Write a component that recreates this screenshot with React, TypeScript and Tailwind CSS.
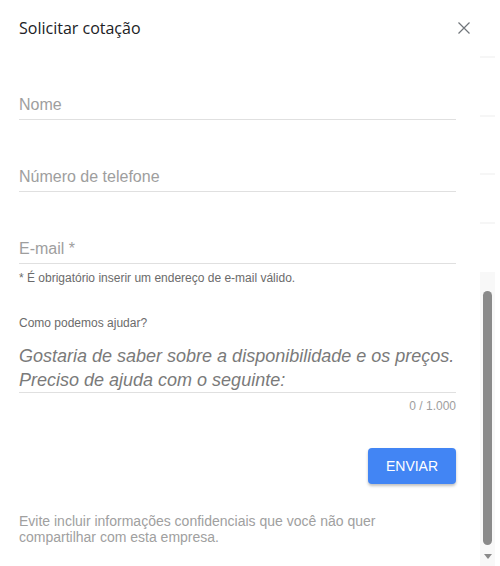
import React, { useState } from "react";

const arial = { fontFamily: '"Liberation Sans", Arial, sans-serif' };

function Campo({ placeholder, className }: { placeholder: string; className?: string }) {
  return (
    <div className={"border-b border-[#e0e0e0] pb-[3px] " + (className ?? "")}>
      <div className="text-[16px] leading-[22px] text-[#9e9e9e]" style={arial}>
        {placeholder}
      </div>
    </div>
  );
}

export default function App() {
  const [mensagem] = useState("");

  return (
    <div className="flex w-[500px] h-[566px] bg-white overflow-hidden">
      {/* coluna principal */}
      <div className="w-[480px] flex flex-col">
        {/* Cabeçalho */}
        <div className="h-[56px] flex items-center justify-between pl-[19px] pr-[4px]">
          <h2
            className="text-[16px] leading-[24px] text-[#202124]"
            style={{ fontFamily: '"Open Sans", sans-serif' }}
          >
            Solicitar cotação
          </h2>
          <button className="w-[24px] h-[24px] flex items-center justify-center">
            <svg width="12" height="12" viewBox="0 0 12 12">
              <path d="M0.5 0.5 L11.5 11.5 M11.5 0.5 L0.5 11.5" stroke="#70757a" strokeWidth="1.2" fill="none" />
            </svg>
          </button>
        </div>

        <div className="pl-[19px] pr-[24px] flex flex-col" style={arial}>
          {/* Nome */}
          <Campo placeholder="Nome" className="mt-[38px]" />

          {/* Telefone */}
          <Campo placeholder="Número de telefone" className="mt-[46px]" />

          {/* E-mail */}
          <Campo placeholder="E-mail *" className="mt-[46px]" />
          <p className="mt-[6px] text-[12px] leading-[16px] text-[#6b6b6b]">
            * É obrigatório inserir um endereço de e-mail válido.
          </p>

          {/* Mensagem */}
          <p className="mt-[29px] text-[12px] leading-[16px] text-[#6b6b6b]">Como podemos ajudar?</p>
          <div className="mt-[13px] border-b border-[#e0e0e0]">
            <p className="text-[18px] leading-[24px] italic text-[#7a7a7a]">
              Gostaria de saber sobre a disponibilidade e os preços.
              <br />
              Preciso de ajuda com o seguinte:
            </p>
          </div>
          <p className="mt-[5px] text-right text-[12px] leading-[16px] text-[#9e9e9e]">
            {mensagem.length} / 1.000
          </p>

          <div className="mt-[34px] flex justify-end">
            <button className="w-[88px] h-[36px] rounded-[4px] bg-[#4285f4] text-white text-[14px] shadow-[0_2px_3px_rgba(0,0,0,0.25)]">
              ENVIAR
            </button>
          </div>

          <p className="mt-[29px] max-w-[400px] text-[14px] leading-[16px] text-[#a0a0a0]">
            Evite incluir informações confidenciais que você não quer compartilhar com esta empresa.
          </p>
        </div>
      </div>

      {/* barra de rolagem */}
      <div className="w-[20px] flex flex-col">
        <div className="mt-[56px] w-[15px] h-[2px] bg-[#f6f6f6]" />
        <div className="mt-[57px] w-[15px] h-[2px] bg-[#f6f6f6]" />
        <div className="mt-[56px] w-[15px] h-[2px] bg-[#f6f6f6]" />
        <div className="mt-[47px] w-[15px] h-[2px] bg-[#f6f6f6]" />
        <div className="mt-[48px] w-[15px] flex-1 bg-[#f8f8f8] flex flex-col items-center pt-[19px]">
          <div className="w-[9px] h-[254px] rounded-full bg-[#8a8a8a]" />
          <svg className="mt-[9px]" width="8" height="5" viewBox="0 0 8 5">
            <path d="M0 0 H8 L4 5 Z" fill="#8a8a8a" />
          </svg>
        </div>
      </div>
    </div>
  );
}
